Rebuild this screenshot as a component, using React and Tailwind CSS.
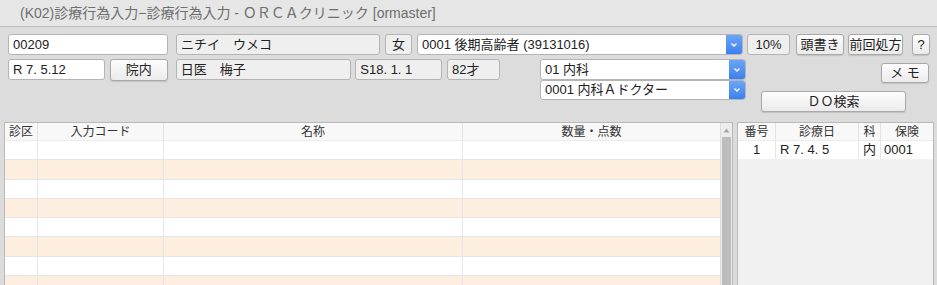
import React from 'react'

const font = "font-['Liberation_Sans','Noto_Sans_CJK_JP',sans-serif]"

function Field({ w, children, readOnly, className = '' }) {
  return (
    <div
      className={`${w} h-[21px] flex items-center px-[4px] rounded-[3px] border border-[#b4b4b4] text-[13px] text-[#222] whitespace-nowrap overflow-hidden ${
        readOnly ? 'bg-[#efefef]' : 'bg-white'
      } ${className}`}
    >
      {children}
    </div>
  )
}

function Btn({ w, h = 'h-[21px]', children, className = '' }) {
  return (
    <div
      className={`${w} ${h} flex items-center justify-center rounded-[3px] border border-[#a9a9a9] bg-gradient-to-b from-[#fdfdfd] to-[#ebebeb] shadow-[0_1px_1px_rgba(0,0,0,0.12)] text-[13px] text-[#222] whitespace-nowrap ${className}`}
    >
      {children}
    </div>
  )
}

function Select({ w, h = 'h-[21px]', children }) {
  return (
    <div className={`${w} ${h} flex rounded-[3px] border border-[#b4b4b4] bg-white overflow-hidden`}>
      <div className="flex-1 flex items-center px-[4px] text-[13px] text-[#222] whitespace-nowrap">{children}</div>
      <div className="w-[16px] flex items-center justify-center bg-gradient-to-b from-[#6aa6f7] to-[#3c80ef]">
        <svg width="8" height="6" viewBox="0 0 8 6">
          <path d="M1.5 1.5 L4 4 L6.5 1.5" stroke="white" strokeWidth="1.4" fill="none" />
        </svg>
      </div>
    </div>
  )
}

const leftCols = [
  { label: '診区', w: 'w-[33px]' },
  { label: '入力コード', w: 'w-[126px]' },
  { label: '名称', w: 'w-[299px]' },
  { label: '数量・点数', w: 'flex-1' },
]

const rightCols = [
  { label: '番号', w: 'w-[38px]', val: '1', align: 'justify-center' },
  { label: '診療日', w: 'w-[83px]', val: 'R 7. 4. 5', align: 'justify-start pl-[4px]' },
  { label: '科', w: 'w-[22px]', val: '内', align: 'justify-center' },
  { label: '保険', w: 'flex-1', val: '0001', align: 'justify-start pl-[3px]' },
]

export default function App() {
  const rows = Array.from({ length: 9 }, (_, i) => i)

  return (
    <div className={`w-[937px] h-[285px] overflow-hidden bg-[#dcdcdc] ${font}`}>
      <div className="h-[27px] bg-[#e6e6e6] border-b border-[#bdbdbd] flex items-center pl-[20px] text-[14px] text-[#6e6e6e]">
        (K02)診療行為入力−診療行為入力 - ＯＲＣＡクリニック [ormaster]
      </div>

      <div className="h-[95px] pt-[7px] flex">
        <div className="w-[746px] pl-[8px]">
          <div className="flex">
            <Field w="w-[160px]">00209</Field>
            <Field w="w-[204px]" readOnly className="ml-[8px]">ニチイ　ウメコ</Field>
            <Field w="w-[27px]" readOnly className="ml-[5px] justify-center">女</Field>
            <div className="ml-[5px]">
              <Select w="w-[326px]">0001 後期高齢者 (39131016)</Select>
            </div>
          </div>
          <div className="flex mt-[4px]">
            <Field w="w-[97px]">R 7. 5.12</Field>
            <Btn w="w-[58px]" h="h-[22px]" className="ml-[5px]">院内</Btn>
            <Field w="w-[176px]" readOnly className="ml-[8px]">日医　梅子</Field>
            <Field w="w-[87px]" readOnly className="ml-[4px]">S18. 1. 1</Field>
            <Field w="w-[53px]" readOnly className="ml-[5px]">82才</Field>
            <div className="ml-[40px] flex flex-col">
              <Select w="w-[206px]">01 内科</Select>
              <Select w="w-[206px]" h="h-[20px]">0001 内科Ａドクター</Select>
            </div>
          </div>
        </div>

        <div className="w-[186px] flex flex-col">
          <div className="flex">
            <Field w="w-[43px]" readOnly className="ml-[1px] justify-center">10%</Field>
            <Btn w="w-[48px]" className="ml-[6px]">頭書き</Btn>
            <Btn w="w-[55px]" className="ml-[4px]">前回処方</Btn>
            <Btn w="w-[18px]" className="ml-[9px]">?</Btn>
          </div>
          <Btn w="w-[48px]" h="h-[20px]" className="self-end mt-[8px] mr-[3px]">メ モ</Btn>
          <Btn w="w-[145px]" className="ml-[15px] mt-[8px]">ＤＯ検索</Btn>
        </div>
      </div>

      <div className="flex pl-[4px]">
        <div className="w-[729px] h-[170px] border border-[#b9b9b9] bg-white flex">
          <div className="flex-1 flex flex-col">
            <div className="h-[18px] shrink-0 flex bg-[#f8f8f8] border-b border-[#ececec]">
              {leftCols.map((c, i) => (
                <div
                  key={c.label}
                  className={`${c.w} flex items-center justify-center text-[12px] text-[#333] ${
                    i < leftCols.length - 1 ? 'border-r border-[#e2e2e2]' : ''
                  }`}
                >
                  {c.label}
                </div>
              ))}
            </div>
            {rows.map((r) => (
              <div
                key={r}
                className={`h-[19.3px] shrink-0 flex border-b border-[#e6e6e6] ${r % 2 ? 'bg-[#fdeee0]' : 'bg-white'}`}
              >
                {leftCols.map((c, i) => (
                  <div
                    key={c.label}
                    className={`${c.w} ${i < leftCols.length - 1 ? 'border-r border-[#e6e6e6]' : ''}`}
                  />
                ))}
              </div>
            ))}
          </div>
          <div className="w-[12px] flex flex-col bg-[#ececec] border-l border-[#dcdcdc]">
            <div className="h-[14px] flex items-center justify-center">
              <svg width="7" height="5" viewBox="0 0 7 5">
                <path d="M0.5 4.5 L3.5 0.5 L6.5 4.5 Z" fill="#a8a8a8" />
              </svg>
            </div>
            <div className="flex-1 mx-[1px] bg-[#bdbdbd]" />
          </div>
        </div>

        <div className="ml-[4px] w-[197px] h-[170px] border border-[#b9b9b9] bg-[#f1f1f1] flex flex-col">
          <div className="h-[18px] flex bg-[#f8f8f8] border-b border-[#ececec]">
            {rightCols.map((c, i) => (
              <div
                key={c.label}
                className={`${c.w} flex items-center justify-center text-[12px] text-[#333] ${
                  i < rightCols.length - 1 ? 'border-r border-[#e2e2e2]' : ''
                }`}
              >
                {c.label}
              </div>
            ))}
          </div>
          <div className="h-[18px] flex bg-white">
            {rightCols.map((c, i) => (
              <div
                key={c.label}
                className={`${c.w} flex items-center ${c.align} text-[13px] text-[#222] ${
                  i < rightCols.length - 1 ? 'border-r border-[#e6e6e6]' : ''
                }`}
              >
                {c.val}
              </div>
            ))}
          </div>
        </div>
      </div>
    </div>
  )
}
